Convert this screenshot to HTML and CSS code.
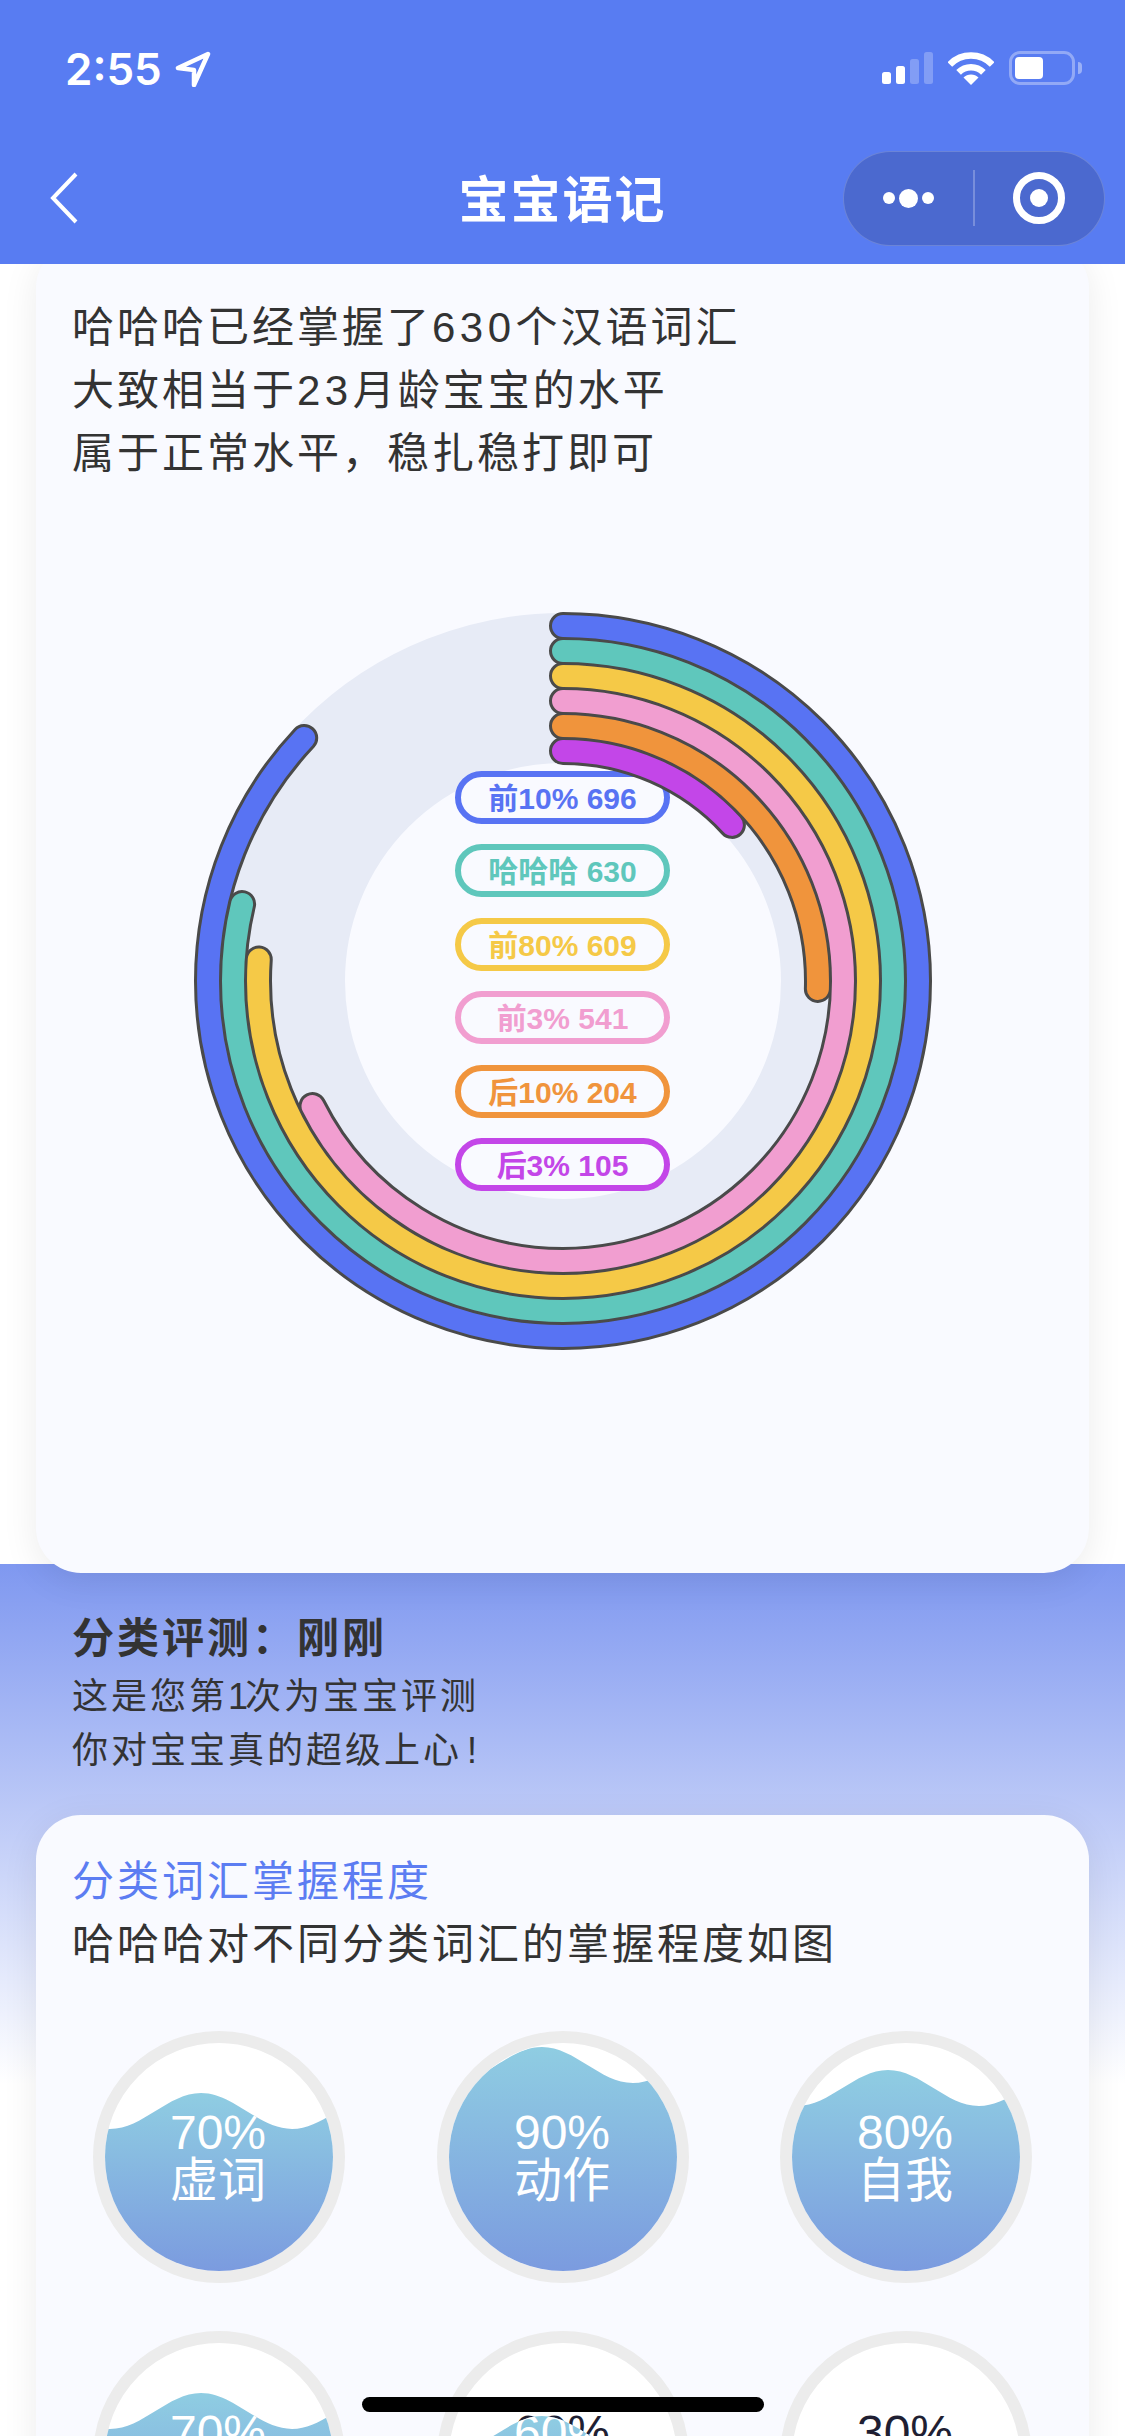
FILE: index.html
```html
<!DOCTYPE html>
<html lang="zh-CN">
<head>
    <meta charset="UTF-8">
    <meta name="viewport" content="width=device-width, initial-scale=1.0">
    <title>宝宝语记</title>
    <link rel="stylesheet" href="styles.css">
</head>
<body>
    <div class="phone">
        <div class="header">
            <div class="status">
                <div class="clock">
                    <span>2:55</span>
                    <svg class="arrow" width="36" height="36" viewBox="0 0 36 36">
                        <path d="M33 3 L3 17 L19 19 L19 34 Z"/>
                    </svg>
                </div>
                <div class="status-icons">
                    <div class="signal">
                        <i class="bar bar-1"></i>
                        <i class="bar bar-2"></i>
                        <i class="bar bar-3 off"></i>
                        <i class="bar bar-4 off"></i>
                    </div>
                    <svg class="wifi" width="46" height="33" viewBox="0 0 46 33">
                        <path d="M1.8 12.5 A29.5 29.5 0 0 1 44.2 12.5"/>
                        <path d="M10.6 20.4 A17.6 17.6 0 0 1 35.4 20.4"/>
                        <path class="wifi-dot" d="M23 33 L15.5 25.5 A10.6 10.6 0 0 1 30.5 25.5 Z"/>
                    </svg>
                    <div class="battery">
                        <div class="battery-level"></div>
                    </div>
                    <div class="battery-nub"></div>
                </div>
            </div>
            <div class="nav">
                <svg class="back" width="30" height="54" viewBox="0 0 30 54">
                    <path d="M26 3 L3 27 L26 51"/>
                </svg>
                <div class="nav-title">宝宝语记</div>
                <div class="capsule">
                    <div class="capsule-btn">
                        <i class="dot"></i>
                        <i class="dot dot-big"></i>
                        <i class="dot"></i>
                    </div>
                    <div class="capsule-line"></div>
                    <div class="capsule-btn">
                        <div class="target"><i></i></div>
                    </div>
                </div>
            </div>
        </div>

        <div class="card card-result">
            <p class="text">哈哈哈已经掌握了<span class="num">630</span>个汉语词汇</p>
            <p class="text">大致相当于<span class="num">23</span>月龄宝宝的水平</p>
            <p class="text">属于正常水平&#xFF0C;稳扎稳打即可</p>
            <div class="chart">
                <div class="track"></div>
                <div class="legend">
                    <div class="pill pill-blue">前10% 696</div>
                    <div class="pill pill-teal">哈哈哈 630</div>
                    <div class="pill pill-yellow">前80% 609</div>
                    <div class="pill pill-pink">前3% 541</div>
                    <div class="pill pill-orange">后10% 204</div>
                    <div class="pill pill-purple">后3% 105</div>
                </div>
                <svg class="rings" width="740" height="740" viewBox="0 0 740 740">
                    <g class="ring-outlines">
                        <circle cx="370" cy="370" r="355" pathLength="800" stroke-dasharray="696 800"/>
                        <circle cx="370" cy="370" r="330" pathLength="800" stroke-dasharray="630 800"/>
                        <circle cx="370" cy="370" r="305" pathLength="800" stroke-dasharray="609 800"/>
                        <circle cx="370" cy="370" r="280" pathLength="800" stroke-dasharray="541 800"/>
                        <circle cx="370" cy="370" r="255" pathLength="800" stroke-dasharray="204 800"/>
                        <circle cx="370" cy="370" r="230" pathLength="800" stroke-dasharray="105 800"/>
                    </g>
                    <g class="ring-fills">
                        <circle class="ring-blue" cx="370" cy="370" r="355" pathLength="800" stroke-dasharray="696 800"/>
                        <circle class="ring-teal" cx="370" cy="370" r="330" pathLength="800" stroke-dasharray="630 800"/>
                        <circle class="ring-yellow" cx="370" cy="370" r="305" pathLength="800" stroke-dasharray="609 800"/>
                        <circle class="ring-pink" cx="370" cy="370" r="280" pathLength="800" stroke-dasharray="541 800"/>
                        <circle class="ring-orange" cx="370" cy="370" r="255" pathLength="800" stroke-dasharray="204 800"/>
                        <circle class="ring-purple" cx="370" cy="370" r="230" pathLength="800" stroke-dasharray="105 800"/>
                    </g>
                </svg>
            </div>
        </div>

        <div class="section">
            <div class="summary">
                <p class="text text-bold">分类评测&#xFF1A;刚刚</p>
                <p class="small">这是您第<span class="num-tight">1</span>次为宝宝评测</p>
                <p class="small">你对宝宝真的超级上心<span class="mark">!</span></p>
            </div>

            <div class="card card-levels">
                <p class="text text-blue">分类词汇掌握程度</p>
                <p class="text">哈哈哈对不同分类词汇的掌握程度如图</p>

                <svg class="defs" width="0" height="0">
                    <defs>
                        <linearGradient id="water" x1="0" y1="0" x2="0" y2="1">
                            <stop offset="0" stop-color="#8fcde2"/>
                            <stop offset="1" stop-color="#7b9bdf"/>
                        </linearGradient>
                        <clipPath id="bowl"><circle cx="126" cy="126" r="114"/></clipPath>
                        <path id="wave" d="M-273 36 C-240 36 -215 0 -182 0 C-149 0 -124 36 -91 36 C-58 36 -33 0 0 0 C33 0 58 36 91 36 C124 36 149 0 182 0 C215 0 240 36 273 36 V300 H-273 Z"/>
                        <clipPath id="level-90"><use href="#wave" x="105" y="16"/></clipPath>
                        <clipPath id="level-80"><use href="#wave" x="108" y="39"/></clipPath>
                        <clipPath id="level-70"><use href="#wave" x="108" y="62"/></clipPath>
                        <clipPath id="level-60"><use href="#wave" x="105" y="85"/></clipPath>
                    </defs>
                </svg>

                <div class="gauges">
                    <svg class="gauge" width="252" height="252" viewBox="0 0 252 252">
                        <circle class="dish" cx="126" cy="126" r="120"/>
                        <g clip-path="url(#bowl)"><g clip-path="url(#level-70)">
                            <rect x="12" y="62" width="228" height="178" fill="url(#water)"/>
                            <text class="gauge-text" x="125" y="118">70%</text>
                            <text class="gauge-text" x="125" y="166">虚词</text>
                        </g></g>
                    </svg>
                    <svg class="gauge" width="252" height="252" viewBox="0 0 252 252">
                        <circle class="dish" cx="126" cy="126" r="120"/>
                        <g clip-path="url(#bowl)"><g clip-path="url(#level-90)">
                            <rect x="12" y="16" width="228" height="224" fill="url(#water)"/>
                            <text class="gauge-text" x="125" y="118">90%</text>
                            <text class="gauge-text" x="125" y="166">动作</text>
                        </g></g>
                    </svg>
                    <svg class="gauge" width="252" height="252" viewBox="0 0 252 252">
                        <circle class="dish" cx="126" cy="126" r="120"/>
                        <g clip-path="url(#bowl)"><g clip-path="url(#level-80)">
                            <rect x="12" y="39" width="228" height="201" fill="url(#water)"/>
                            <text class="gauge-text" x="125" y="118">80%</text>
                            <text class="gauge-text" x="125" y="166">自我</text>
                        </g></g>
                    </svg>
                    <svg class="gauge" width="252" height="252" viewBox="0 0 252 252">
                        <circle class="dish" cx="126" cy="126" r="120"/>
                        <g clip-path="url(#bowl)"><g clip-path="url(#level-70)">
                            <rect x="12" y="62" width="228" height="178" fill="url(#water)"/>
                            <text class="gauge-text" x="125" y="118">70%</text>
                        </g></g>
                    </svg>
                    <svg class="gauge" width="252" height="252" viewBox="0 0 252 252">
                        <circle class="dish" cx="126" cy="126" r="120"/>
                        <text class="gauge-text gauge-dark" x="125" y="118">60%</text>
                        <g clip-path="url(#bowl)"><g clip-path="url(#level-60)">
                            <rect x="12" y="85" width="228" height="155" fill="url(#water)"/>
                            <text class="gauge-text" x="125" y="118">60%</text>
                        </g></g>
                    </svg>
                    <svg class="gauge" width="252" height="252" viewBox="0 0 252 252">
                        <circle class="dish" cx="126" cy="126" r="120"/>
                        <text class="gauge-text gauge-dark" x="125" y="118">30%</text>
                    </svg>
                </div>
            </div>
        </div>

        <div class="home-bar"></div>
    </div>
</body>
</html>
```

FILE: styles.css
```css
*{
    margin: 0;
    padding: 0;
    box-sizing: border-box;
}
html, body{
    width: 1125px;
    height: 2436px;
    overflow: hidden;
    background: #fff;
}
body{
    font-family: "Liberation Sans", "Noto Sans CJK SC", sans-serif;
    color: #333;
}
.phone{
    position: relative;
    width: 1125px;
    height: 2436px;
    overflow: hidden;
    display: flex;
    flex-direction: column;
}

/* header */
.header{
    position: relative;
    z-index: 2;
    flex: none;
    height: 264px;
    background: #587cf2;
    color: #fff;
}
.status{
    height: 132px;
    padding: 50px 43px 0 65px;
    display: flex;
    justify-content: space-between;
    align-items: flex-start;
}
.clock{
    display: flex;
    align-items: center;
    gap: 13px;
    font-family: "Inter", "Liberation Sans", sans-serif;
    font-size: 44px;
    font-weight: 600;
    line-height: 38px;
}
.arrow path{
    fill: none;
    stroke: #fff;
    stroke-width: 4.5;
    stroke-linejoin: round;
}
.status-icons{
    display: flex;
    align-items: center;
    height: 36px;
}
.signal{
    display: flex;
    align-items: flex-end;
    gap: 5px;
    height: 32px;
    margin-right: 15px;
}
.bar{
    display: block;
    width: 9px;
    background: #fff;
    border-radius: 2.5px;
}
.bar.off{
    background: rgba(255, 255, 255, .25);
}
.bar-1{ height: 12px; }
.bar-2{ height: 18px; }
.bar-3{ height: 25px; }
.bar-4{ height: 32px; }
.wifi{
    margin-right: 15px;
}
.wifi path{
    fill: none;
    stroke: #fff;
    stroke-width: 6.6;
}
.wifi .wifi-dot{
    fill: #fff;
    stroke: none;
}
.battery{
    width: 66px;
    height: 34px;
    padding: 3px;
    border: 3px solid rgba(255, 255, 255, .35);
    border-radius: 11px;
}
.battery-level{
    width: 28px;
    height: 100%;
    background: #fff;
    border-radius: 4px;
}
.battery-nub{
    width: 4px;
    height: 12px;
    margin-left: 3px;
    background: rgba(255, 255, 255, .4);
    border-radius: 0 4px 4px 0;
}
.nav{
    height: 132px;
    padding: 0 20px;
    display: grid;
    grid-template-columns: 1fr auto 1fr;
    align-items: center;
}
.back{
    margin-left: 30px;
}
.back path{
    fill: none;
    stroke: #fff;
    stroke-width: 4;
}
.nav-title{
    font-size: 50px;
    font-weight: 700;
    letter-spacing: 2px;
    transform: translateY(-2px);
}
.capsule{
    justify-self: end;
    width: 262px;
    height: 95px;
    display: flex;
    align-items: center;
    background: #4b69cf;
    border: 1.5px solid rgba(255, 255, 255, .18);
    border-radius: 48px;
}
.capsule-btn{
    flex: 1;
    display: flex;
    justify-content: center;
    align-items: center;
    gap: 4px;
}
.capsule-line{
    width: 1.5px;
    height: 56px;
    background: rgba(255, 255, 255, .25);
}
.dot{
    display: block;
    width: 12px;
    height: 12px;
    background: #fff;
    border-radius: 50%;
}
.dot-big{
    width: 19px;
    height: 19px;
}
.target{
    width: 52px;
    height: 52px;
    border: 7px solid #fff;
    border-radius: 50%;
    display: flex;
    justify-content: center;
    align-items: center;
}
.target i{
    display: block;
    width: 18px;
    height: 18px;
    background: #fff;
    border-radius: 50%;
}

/* cards */
.card{
    position: relative;
    width: 1053px;
    margin: 0 36px;
    padding: 0 36px;
    background: #f9faff;
    border-radius: 45px;
    box-shadow: 0 8px 36px rgba(0, 0, 0, .08);
}
.card-result{
    z-index: 1;
    flex: none;
    margin-top: -21px;
    padding-top: 53px;
    padding-bottom: 221.5px;
}
.text{
    font-size: 42px;
    line-height: 63px;
    letter-spacing: 3px;
    white-space: nowrap;
}
.text-bold{
    font-weight: 700;
}
.text-blue{
    color: #5c7df2;
}
.num{
    letter-spacing: 4.5px;
}
.small{
    font-size: 36px;
    line-height: 54px;
    letter-spacing: 3px;
    white-space: nowrap;
}
.num-tight{
    letter-spacing: -3px;
}
.mark{
    margin-left: 5px;
}

/* ring chart */
.chart{
    display: grid;
    justify-content: center;
    align-items: center;
    justify-items: center;
    width: 740px;
    height: 740px;
    margin: 126px auto 0;
}
.track, .legend, .rings{
    grid-area: 1 / 1;
}
.track{
    width: 736px;
    height: 736px;
    border: 150px solid #e7ebf6;
    border-radius: 50%;
}
.legend{
    display: flex;
    flex-direction: column;
    gap: 20.6px;
}
.pill{
    width: 215px;
    height: 53px;
    padding-bottom: 3px;
    display: flex;
    justify-content: center;
    align-items: center;
    background: #f9faff;
    border: 6px solid;
    border-radius: 27px;
    font-size: 30px;
    font-weight: 700;
    white-space: nowrap;
}
.pill-blue{ color: #5873f3; }
.pill-teal{ color: #5fc7bc; }
.pill-yellow{ color: #f5c947; }
.pill-pink{ color: #f19ed0; }
.pill-orange{ color: #f0943c; }
.pill-purple{ color: #c346e8; }
.rings{
    transform: rotate(-90deg);
}
.rings circle{
    fill: none;
    stroke-linecap: round;
}
.ring-outlines circle{
    stroke: #4a4a4a;
    stroke-width: 28;
}
.ring-fills circle{
    stroke-width: 22;
}
.ring-blue{ stroke: #5873f3; }
.ring-teal{ stroke: #5fc7bc; }
.ring-yellow{ stroke: #f5c947; }
.ring-pink{ stroke: #f19ed0; }
.ring-orange{ stroke: #f0943c; }
.ring-purple{ stroke: #c346e8; }

/* second part of the page */
.section{
    flex: none;
    margin-top: -9px;
    padding-top: 43.5px;
    background: linear-gradient(#7f98f0, #fff) no-repeat;
    background-size: 100% 520px;
}
.summary{
    padding-left: 72px;
}
.card-levels{
    margin-top: 37px;
    padding-top: 34.5px;
    padding-bottom: 60px;
}
.defs{
    position: absolute;
}
.gauges{
    display: grid;
    grid-template-columns: repeat(3, 252px);
    justify-content: space-between;
    row-gap: 48px;
    margin: 55.5px 21px 0;
}
.gauge{
    display: block;
}
.dish{
    fill: #fff;
    stroke: #ececec;
    stroke-width: 12;
}
.gauge-text{
    fill: #fff;
    font-size: 48px;
    text-anchor: middle;
}
.gauge-dark{
    fill: #1f1f33;
}

.home-bar{
    position: absolute;
    left: 362px;
    top: 2397px;
    z-index: 3;
    width: 402px;
    height: 15px;
    background: #000;
    border-radius: 8px;
}
```
